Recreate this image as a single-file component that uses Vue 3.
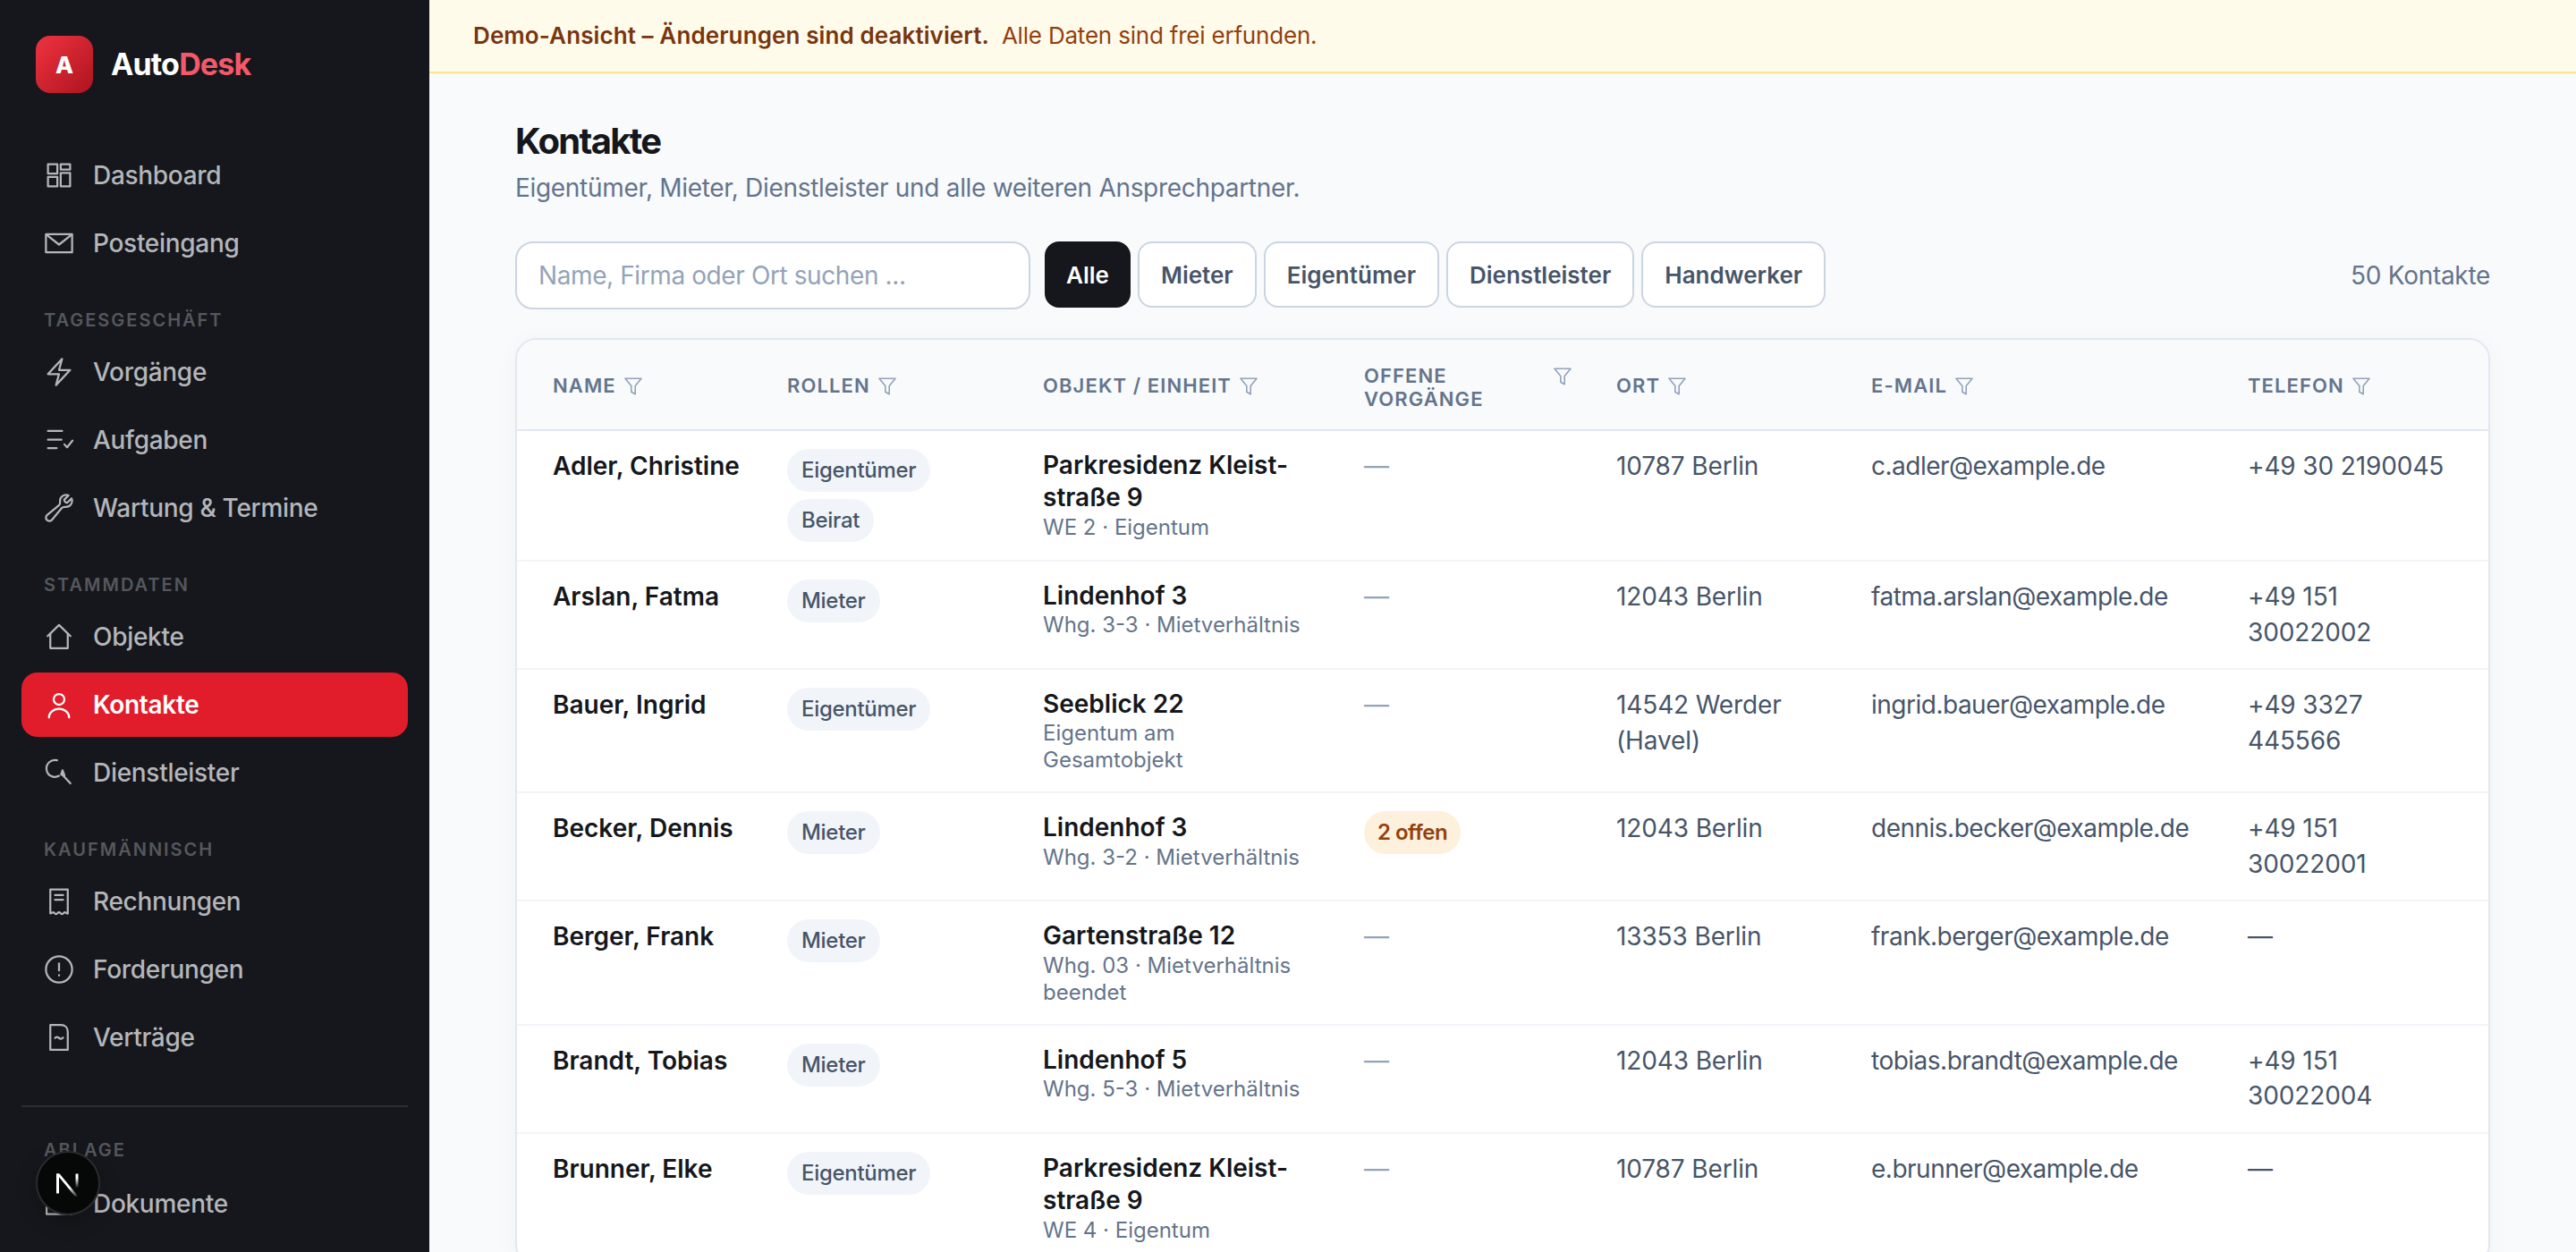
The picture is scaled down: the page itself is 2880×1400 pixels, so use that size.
<script setup>
const navTop = [
  { label: 'Dashboard', icon: 'grid' },
  { label: 'Posteingang', icon: 'mail' }
]
const navGroups = [
  { title: 'Tagesgeschäft', items: [
    { label: 'Vorgänge', icon: 'bolt' },
    { label: 'Aufgaben', icon: 'tasks' },
    { label: 'Wartung & Termine', icon: 'wrench' }
  ] },
  { title: 'Stammdaten', items: [
    { label: 'Objekte', icon: 'home' },
    { label: 'Kontakte', icon: 'user', active: true },
    { label: 'Dienstleister', icon: 'search' }
  ] },
  { title: 'Kaufmännisch', items: [
    { label: 'Rechnungen', icon: 'receipt' },
    { label: 'Forderungen', icon: 'alert' },
    { label: 'Verträge', icon: 'contract' }
  ] }
]
const icons = {
  grid: ['M3.75 3.75h7v7h-7z', 'M13.25 3.75h7v4h-7z', 'M13.25 10.25h7v10h-7z', 'M3.75 13.25h7v7h-7z'],
  mail: ['M2.25 5.25h19.5v13.5H2.25z', 'M2.75 5.75L12 13l9.25-7.25'],
  bolt: ['M3.75 13.5l10.5-11.25L12 10.5h8.25L9.75 21.75 12 13.5H3.75z'],
  tasks: ['M3.75 5.25h10.5', 'M3.75 11.75h10', 'M3.75 18h6.5', 'M16 15.25l2 2.25 4-5'],
  wrench: ['M21.75 6.75a4.5 4.5 0 01-4.884 4.484c-1.076-.091-2.264.071-2.95.904l-7.152 8.684a2.548 2.548 0 11-3.586-3.586l8.684-7.152c.833-.686.995-1.874.904-2.95a4.5 4.5 0 016.336-4.486l-3.276 3.276a3.004 3.004 0 002.25 2.25l3.276-3.276c.317.74.398 1.574.398 1.852z'],
  home: ['M3.5 11.5L12 3.25l8.5 8.25', 'M5.5 9.75V20.5h13V9.75'],
  user: ['M16 8a4 4 0 11-8 0 4 4 0 018 0z', 'M4.5 21.5a7.5 6.5 0 0115 0'],
  search: ['M10.5 2.8A6.3 6.3 0 1012 14.4', 'M14 13l6.5 7', 'M14.6 10.2l-1 3.2 2.4.6z'],
  receipt: ['M5.5 3h13v18c-1 .4-1.5-1-2.2-1s-1.2 1.4-2.2 1.4-1.1-1.4-2.1-1.4-1.1 1.4-2.1 1.4-1.5-1.4-2.2-1.4-1.2 1-2.2.9z', 'M9 7.25h6', 'M9 10.75h6'],
  alert: ['M21.75 12a9.75 9.75 0 11-19.5 0 9.75 9.75 0 0119.5 0z', 'M12 7.5v5.25', 'M12 16.25v.25'],
  contract: ['M5.5 2.75h8c3 0 5 2 5 5v13.5h-13z', 'M9 12.5c1-1.2 2-.8 3 0s2 .8 3-.3'],
  folder: ['M2.75 6.5h6.5l2 2.25h10v11h-18.5z']
}
const columns = ['Name', 'Rollen', 'Objekt / Einheit', 'Offene Vorgänge', 'Ort', 'E-Mail', 'Telefon']
const chips = ['Alle', 'Mieter', 'Eigentümer', 'Dienstleister', 'Handwerker']
const contacts = [
  { name: 'Adler, Christine', roles: ['Eigentümer', 'Beirat'], obj: 'Parkresidenz Kleist-straße 9', sub: 'WE 2 · Eigentum', ort: '10787 Berlin', mail: 'c.adler@example.de', tel: '+49 30 2190045' },
  { name: 'Arslan, Fatma', roles: ['Mieter'], obj: 'Lindenhof 3', sub: 'Whg. 3-3 · Mietverhältnis', ort: '12043 Berlin', mail: 'fatma.arslan@example.de', tel: '+49 151 30022002' },
  { name: 'Bauer, Ingrid', roles: ['Eigentümer'], obj: 'Seeblick 22', sub: 'Eigentum am Gesamtobjekt', ort: '14542 Werder (Havel)', mail: 'ingrid.bauer@example.de', tel: '+49 3327 445566' },
  { name: 'Becker, Dennis', roles: ['Mieter'], obj: 'Lindenhof 3', sub: 'Whg. 3-2 · Mietverhältnis', open: '2 offen', ort: '12043 Berlin', mail: 'dennis.becker@example.de', tel: '+49 151 30022001' },
  { name: 'Berger, Frank', roles: ['Mieter'], obj: 'Gartenstraße 12', sub: 'Whg. 03 · Mietverhältnis beendet', ort: '13353 Berlin', mail: 'frank.berger@example.de', tel: '—' },
  { name: 'Brandt, Tobias', roles: ['Mieter'], obj: 'Lindenhof 5', sub: 'Whg. 5-3 · Mietverhältnis', ort: '12043 Berlin', mail: 'tobias.brandt@example.de', tel: '+49 151 30022004' },
  { name: 'Brunner, Elke', roles: ['Eigentümer'], obj: 'Parkresidenz Kleist-straße 9', sub: 'WE 4 · Eigentum', ort: '10787 Berlin', mail: 'e.brunner@example.de', tel: '—' }
]
</script>

<template>
  <div class="app">
    <aside class="sidebar">
      <div class="brand">
        <div class="logo">A</div>
        <div class="brand-name">Auto<span>Desk</span></div>
      </div>
      <nav class="nav">
        <a v-for="item in navTop" :key="item.label" class="nav-item">
          <svg class="nav-icon" viewBox="0 0 24 24"><path v-for="d in icons[item.icon]" :key="d" :d="d" /></svg>
          {{ item.label }}
        </a>
        <template v-for="group in navGroups" :key="group.title">
          <div class="nav-label">{{ group.title }}</div>
          <a v-for="item in group.items" :key="item.label" class="nav-item" :class="{ active: item.active }">
            <svg class="nav-icon" viewBox="0 0 24 24"><path v-for="d in icons[item.icon]" :key="d" :d="d" /></svg>
            {{ item.label }}
          </a>
        </template>
        <div class="nav-divider"></div>
        <div class="nav-label">Ablage</div>
        <a class="nav-item">
          <svg class="nav-icon" viewBox="0 0 24 24"><path v-for="d in icons.folder" :key="d" :d="d" /></svg>
          Dokumente
        </a>
      </nav>
      <div class="dev-badge">
        <svg viewBox="0 0 40 40" width="40" height="40">
          <defs>
            <linearGradient id="nfade" x1="0" y1="0" x2="0" y2="1">
              <stop offset="0.3" stop-color="#fff" />
              <stop offset="1" stop-color="#fff" stop-opacity="0" />
            </linearGradient>
            <linearGradient id="nfade2" x1="0" y1="0" x2="1" y2="1">
              <stop offset="0.6" stop-color="#fff" />
              <stop offset="1" stop-color="#fff" stop-opacity="0" />
            </linearGradient>
          </defs>
          <path d="M7 9.5h3v22H7z" fill="#fff" />
          <path d="M7 9.5h3.6l21 25.5h-3.6z" fill="url(#nfade2)" />
          <path d="M28.5 9.5h3v16h-3z" fill="url(#nfade)" />
        </svg>
      </div>
    </aside>

    <div class="content">
      <div class="banner">
        <strong>Demo-Ansicht – Änderungen sind deaktiviert.</strong>
        <span>Alle Daten sind frei erfunden.</span>
      </div>
      <main class="page">
        <h1>Kontakte</h1>
        <p class="subtitle">Eigentümer, Mieter, Dienstleister und alle weiteren Ansprechpartner.</p>

        <div class="toolbar">
          <input class="search" type="text" placeholder="Name, Firma oder Ort suchen ..." />
          <div class="chips">
            <button v-for="(chip, i) in chips" :key="chip" class="chip" :class="{ selected: i === 0 }">{{ chip }}</button>
          </div>
          <div class="count">50 Kontakte</div>
        </div>

        <div class="table-card">
          <table>
            <colgroup>
              <col style="width: 282px" />
              <col style="width: 286px" />
              <col style="width: 359px" />
              <col style="width: 282px" />
              <col style="width: 285px" />
              <col style="width: 421px" />
              <col style="width: 289px" />
            </colgroup>
            <thead>
              <tr>
                <th v-for="col in columns" :key="col">
                  <div class="th-inner">
                    <span>{{ col }}</span>
                    <svg class="funnel" viewBox="0 0 20 20"><path d="M1 1.2h18l-6.8 8.3v9.3l-4.4-2.6v-6.7z" /></svg>
                  </div>
                </th>
              </tr>
            </thead>
            <tbody>
              <tr v-for="c in contacts" :key="c.name">
                <td class="name">{{ c.name }}</td>
                <td>
                  <div class="roles">
                    <span v-for="r in c.roles" :key="r" class="role">{{ r }}</span>
                  </div>
                </td>
                <td class="obj">
                  <div class="obj-name">{{ c.obj }}</div>
                  <div class="obj-sub">{{ c.sub }}</div>
                </td>
                <td>
                  <span v-if="c.open" class="open">{{ c.open }}</span>
                  <span v-else class="dash">—</span>
                </td>
                <td class="ort">{{ c.ort }}</td>
                <td class="mail">{{ c.mail }}</td>
                <td class="tel">{{ c.tel }}</td>
              </tr>
            </tbody>
          </table>
        </div>
      </main>
    </div>
  </div>
</template>

<style>
html, body {
  margin: 0;
  height: 100%;
  overflow: hidden;
}
</style>

<style scoped>
.app {
  display: flex;
  height: 1400px;
  overflow: hidden;
  font-family: Inter, "Noto Sans", sans-serif;
  background: #f8fafc;
}

.sidebar {
  position: relative;
  flex: 0 0 480px;
  background: #15171c;
  overflow: hidden;
}

.brand {
  display: flex;
  align-items: center;
  gap: 20px;
  padding: 40px 40px 0;
  height: 64px;
}

.logo {
  width: 64px;
  height: 64px;
  border-radius: 16px;
  background: linear-gradient(135deg, #ef3340, #ad141f);
  color: #fff;
  font-size: 26px;
  font-weight: 800;
  display: flex;
  align-items: center;
  justify-content: center;
}

.brand-name {
  margin-bottom: 2px;
  font-size: 34px;
  font-weight: 700;
  letter-spacing: -0.025em;
  color: #fff;
}

.brand-name span {
  color: #f4596b;
}

.nav {
  display: flex;
  flex-direction: column;
  gap: 4px;
  padding: 56px 24px 0;
}

.nav-item {
  display: flex;
  align-items: center;
  gap: 20px;
  height: 72px;
  flex: none;
  padding-left: 24px;
  border-radius: 18px;
  font-size: 28px;
  font-weight: 500;
  letter-spacing: -0.3px;
  color: #b4b6ba;
}

.nav-item.active {
  background: #e11d2b;
  color: #fff;
  font-weight: 600;
}

.nav-icon {
  width: 36px;
  height: 36px;
  flex: none;
  fill: none;
  stroke: currentColor;
  stroke-width: 1.5;
  stroke-linecap: round;
  stroke-linejoin: round;
}

.nav-label {
  margin-top: 32px;
  padding: 0 0 4px 25px;
  height: 28px;
  line-height: 28px;
  font-size: 20px;
  font-weight: 600;
  letter-spacing: 0.1em;
  text-transform: uppercase;
  color: #55575d;
}

.nav-divider {
  height: 2px;
  margin-top: 36px;
  background: #2c2e35;
}

.nav-divider + .nav-label {
  margin-top: 30px;
  padding-bottom: 6px;
}

.dev-badge {
  position: absolute;
  left: 40px;
  top: 1287px;
  width: 72px;
  height: 72px;
  border-radius: 50%;
  background: #060707;
  border: 2px solid #2b2c2f;
  box-sizing: border-box;
  display: flex;
  align-items: center;
  justify-content: center;
  box-shadow: 0 8px 24px rgba(0, 0, 0, 0.2);
}

.content {
  flex: 1;
  min-width: 0;
  display: flex;
  flex-direction: column;
}

.banner {
  display: flex;
  align-items: center;
  gap: 14px;
  height: 82px;
  box-sizing: border-box;
  flex: none;
  padding: 0 48px 2px 49px;
  background: #fffbeb;
  border-bottom: 2px solid #fde68a;
  font-size: 26px;
  color: #92400e;
}

.banner strong {
  font-weight: 600;
  letter-spacing: 0.1px;
  color: #78350f;
}

.banner span {
  letter-spacing: -0.2px;
}

.page {
  padding: 50px 96px 0;
}

h1 {
  margin: 0;
  font-size: 40px;
  line-height: 52px;
  font-weight: 700;
  letter-spacing: -1.7px;
  color: #15171c;
}

.subtitle {
  margin: 6px 0 0;
  font-size: 28px;
  line-height: 40px;
  letter-spacing: -0.31px;
  color: #64748b;
}

.toolbar {
  display: flex;
  align-items: center;
  gap: 16px;
  margin-top: 40px;
}

.search {
  width: 576px;
  height: 76px;
  box-sizing: border-box;
  padding: 0 24px;
  border: 2px solid #cbd5e1;
  border-radius: 20px;
  background: #fff;
  font-family: inherit;
  font-size: 28px;
  letter-spacing: -0.4px;
  color: #15171c;
  outline: none;
}

.search::placeholder {
  color: #94a3b8;
}

.chips {
  display: flex;
  gap: 8px;
  align-self: flex-start;
}

.chip {
  height: 74px;
  padding: 0 24px;
  border: 2px solid #cbd5e1;
  border-radius: 16px;
  background: #fff;
  font-family: inherit;
  font-size: 26px;
  font-weight: 600;
  color: #475569;
}

.chip.selected {
  padding: 0 22px;
  background: #15171c;
  border-color: #15171c;
  color: #fff;
}

.count {
  margin-left: auto;
  font-size: 28px;
  letter-spacing: -0.3px;
  color: #64748b;
}

.table-card {
  margin-top: 32px;
  border: 2px solid #e2e8f0;
  border-radius: 24px;
  background: #fff;
  box-shadow: 0 4px 24px rgba(15, 23, 42, 0.04);
  overflow: hidden;
}

table {
  width: 100%;
  table-layout: fixed;
  border-collapse: separate;
  border-spacing: 0;
  font-size: 28px;
  line-height: 39.5px;
  color: #475569;
}

th {
  height: 102px;
  padding: 2px 20px 0;
  box-sizing: border-box;
  background: #f8fafc;
  border-bottom: 2px solid #e2e8f0;
  text-align: left;
  font-size: 22px;
  line-height: 26px;
  font-weight: 600;
  letter-spacing: 0.05em;
  text-transform: uppercase;
  color: #64748b;
}

th:nth-child(4) {
  padding-top: 6px;
  padding-right: 30px;
}

.th-inner {
  display: flex;
  align-items: flex-start;
  gap: 9px;
}

.funnel {
  width: 20px;
  height: 20px;
  flex: none;
  margin-top: 4px;
  fill: none;
  stroke: #94a3b8;
  stroke-width: 1.6;
  stroke-linejoin: round;
}

td {
  padding: 20px;
  vertical-align: top;
  border-bottom: 2px solid #f1f5f9;
}

th:first-child,
td:first-child {
  padding-left: 40px;
}

th:last-child,
td:last-child {
  padding-right: 40px;
}

.name {
  font-weight: 600;
  color: #15171c;
  white-space: nowrap;
}

.ort,
.tel {
  letter-spacing: -0.12px;
}

.mail {
  letter-spacing: -0.5px;
}

.roles {
  display: flex;
  flex-direction: column;
  align-items: flex-start;
  gap: 8px;
}

.role,
.open {
  display: inline-block;
  height: 48px;
  line-height: 48px;
  padding: 0 16px;
  border-radius: 24px;
  font-size: 24px;
  font-weight: 500;
  letter-spacing: -0.3px;
  background: #f1f5f9;
  color: #475569;
}

.open {
  padding: 0 15px;
  background: #fdf0dc;
  color: #92400e;
  font-weight: 600;
  letter-spacing: -0.5px;
}

td.obj {
  padding-right: 40px;
}

.obj-name {
  font-weight: 600;
  line-height: 36.4px;
  color: #15171c;
}

.obj-sub {
  font-size: 24px;
  line-height: 30px;
  color: #64748b;
}

.dash {
  color: #94a3b8;
}
</style>
